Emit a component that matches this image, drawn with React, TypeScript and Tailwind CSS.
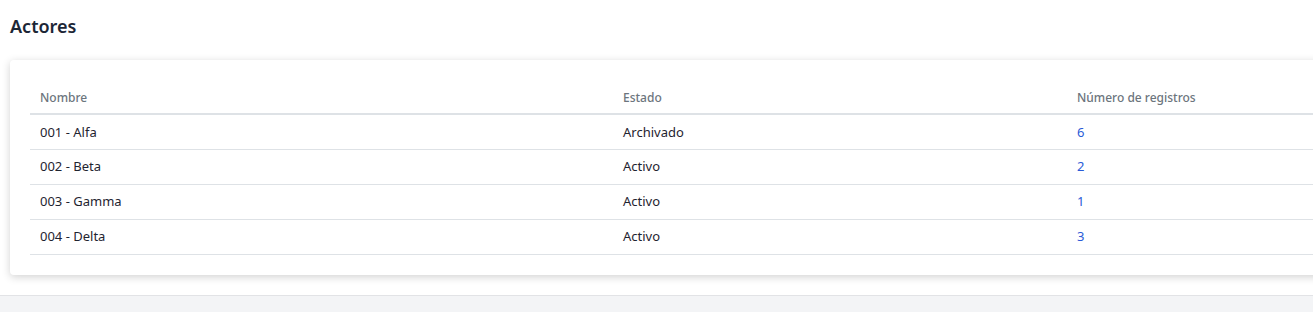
const rows = [
  { name: "001 - Alfa", state: "Archivado", count: 6 },
  { name: "002 - Beta", state: "Activo", count: 2 },
  { name: "003 - Gamma", state: "Activo", count: 1 },
  { name: "004 - Delta", state: "Activo", count: 3 },
];

export default function App() {
  return (
    <div className="w-full overflow-hidden bg-white font-['Noto_Sans',sans-serif] text-[#1f2430]">
      {/* cabecera */}
      <div className="px-[10px] pt-[12px] pb-[20px]">
        <h1 className="text-[18px] leading-[28px] font-semibold text-[#1c2636]">Actores</h1>
      </div>

      {/* tarjeta con la tabla */}
      <div className="pl-[10px] pb-[20px]">
        <div className="w-[1340px] rounded-[4px] bg-white p-[20px] shadow-[0_2px_8px_rgba(0,0,0,0.18)]">
          <table className="w-full table-fixed border-collapse text-left">
            <colgroup>
              <col className="w-[583px]" />
              <col className="w-[454px]" />
              <col />
            </colgroup>
            <thead>
              <tr className="border-b-2 border-[#dee2e6]">
                <th className="h-[34px] px-[10px] pt-[2px] align-middle text-[12px] font-medium text-[#6c757d]">Nombre</th>
                <th className="h-[34px] px-[10px] pt-[2px] align-middle text-[12px] font-medium text-[#6c757d]">Estado</th>
                <th className="h-[34px] px-[10px] pt-[2px] align-middle text-[12px] font-medium text-[#6c757d]">Número de registros</th>
              </tr>
            </thead>
            <tbody>
              {rows.map((r) => (
                <tr key={r.name} className="border-b border-[#dee2e6]">
                  <td className="h-[35px] px-[10px] pt-[1px] align-middle text-[13px]">{r.name}</td>
                  <td className="h-[35px] px-[10px] pt-[1px] align-middle text-[13px]">{r.state}</td>
                  <td className="h-[35px] px-[10px] pt-[1px] align-middle text-[13px]">
                    <a href="#" className="text-[#2a5bd7]">{r.count}</a>
                  </td>
                </tr>
              ))}
            </tbody>
          </table>
        </div>
      </div>

      {/* pie */}
      <div className="h-[17px] border-t border-[#e2e3e6] bg-[#f3f4f6]" />
    </div>
  );
}
